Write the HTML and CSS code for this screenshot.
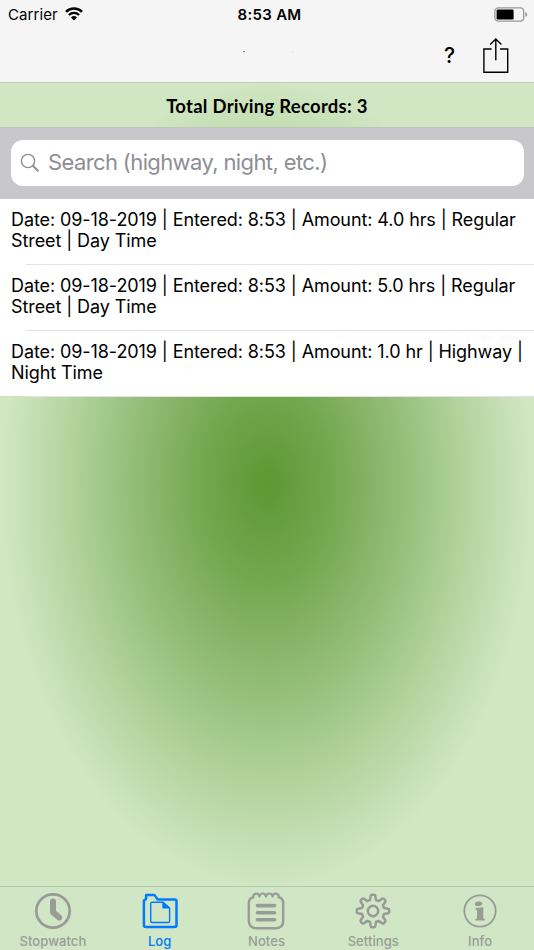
FILE: index.html
```html
<!DOCTYPE html>
<html lang="en">
<head>
  <meta charset="UTF-8" />
  <title>Driving Log</title>
  <link rel="stylesheet" href="styles.css">
</head>
<body>
  <div class="screen">
    <header class="top">
      <div class="status-bar">
        <div class="carrier">
          <span>Carrier</span>
          <svg class="wifi" width="18" height="14" viewBox="0 0 18 14">
            <path d="M1 4.8a11.5 11.5 0 0 1 16 0" fill="none" stroke="#000" stroke-width="2.5"/>
            <path d="M3.9 8a7.4 7.4 0 0 1 10.2 0" fill="none" stroke="#000" stroke-width="2.3"/>
            <path d="M6 10.4a4.3 4.3 0 0 1 6 0L9 13.6z"/>
          </svg>
        </div>
        <span class="time">8:53 AM</span>
        <svg class="battery" width="34" height="15" viewBox="0 0 34 15">
          <rect x=".9" y=".9" width="28.8" height="13.2" rx="3.4" fill="none" stroke="#999" stroke-width="1.3"/>
          <rect x="2.6" y="2.6" width="17" height="9.8" rx="1.2"/>
          <path d="M31.4 5c2.4.8 2.4 4.2 0 5z" fill="#999"/>
        </svg>
      </div>
      <nav class="nav-bar">
        <svg class="title-dots" width="60" height="10" viewBox="0 0 60 10">
          <rect x="5" y="3.2" width="2" height="1" fill="#777"/>
          <rect x="54" y="3.5" width="1" height="1" fill="#ccc"/>
        </svg>
        <span class="help">?</span>
        <svg class="share" width="28" height="37" viewBox="0 0 28 37" fill="none" stroke="#000" stroke-width="1.4">
          <path d="M9.6 12H1.9v23.3h23.8V12h-7.7"/>
          <path d="M13.8 23.2V2.2M8.2 7.6l5.6-5.7 5.6 5.7"/>
        </svg>
      </nav>
    </header>

    <h1 class="total">Total Driving Records: 3</h1>

    <div class="search">
      <div class="search-field">
        <svg width="20" height="20" viewBox="0 0 20 20" fill="none" stroke="#8e8e93">
          <circle cx="8" cy="8" r="6.6" stroke-width="1.4"/>
          <path d="M12.8 12.8l5.6 5.5" stroke-width="2"/>
        </svg>
        <span>Search (highway, night, etc.)</span>
      </div>
    </div>

    <ul class="records">
      <li>Date: 09-18-2019 | Entered: 8:53 | Amount: 4.0 hrs | Regular<br>Street | Day Time</li>
      <li>Date: 09-18-2019 | Entered: 8:53 | Amount: 5.0 hrs | Regular<br>Street | Day Time</li>
      <li>Date: 09-18-2019 | Entered: 8:53 | Amount: 1.0 hr | Highway |<br>Night Time</li>
    </ul>

    <footer class="tab-bar">
      <div class="tab">
        <svg width="40" height="40" viewBox="-20 -20 40 40" fill="none" stroke="#999b99">
          <circle r="16.7" stroke-width="2.7"/>
          <path d="M0-9.5V1.2L6.2 6.6" stroke-width="6" stroke-linecap="round" stroke-linejoin="round"/>
        </svg>
        <span>Stopwatch</span>
      </div>
      <div class="tab active">
        <svg width="40" height="40" viewBox="0 0 40 40" fill="none" stroke="#007aff" stroke-linejoin="round">
          <path d="M3.9 34V9.6L6.1 8V3.9h8.3l3.2 4.5h17.2q1.7 0 1.7 1.7V34q0 2-2 2H5.9q-2 0-2-2z" stroke-width="2.5"/>
          <path d="M12.2 11.2H23l6.6 6V30q0 1.5-1.5 1.5H12.2q-1.5 0-1.5-1.5V12.7q0-1.5 1.5-1.5z" stroke-width="1.4"/>
          <path d="M23 11.5v5.3h6.3z" fill="#007aff" stroke-width="1.4"/>
        </svg>
        <span>Log</span>
      </div>
      <div class="tab">
        <svg width="40" height="40" viewBox="0 0 40 40" fill="none" stroke="#999b99" stroke-linecap="round" stroke-linejoin="round">
          <path d="M7.2 6.2Q2.8 7.4 2.8 12.3v17.5q0 7.4 7.4 7.4h19.6q7.4 0 7.4-7.4V12.3q0-4.9-4.4-6.1" stroke-width="2.4"/>
          <path d="M7 6.6c.2-5.100 5.600-5.100 6.400-1.100c.6-4 5.900-4 6.600 0c.7-4 6-4 6.600 0c.8-4 6.200-4 6.400 1.100" stroke-width="2.2"/>
          <path d="M11.400 14.600h17.200M11.400 21.700h17.200M11.400 28.800h17.200" stroke-width="3.600"/>
        </svg>
        <span>Notes</span>
      </div>
      <div class="tab">
        <svg width="40" height="40" viewBox="-20 -20 40 40" fill="none" stroke="#999b99" stroke-width="2.5" stroke-linejoin="round">
          <path d="M-3-11L-2.300-15Q-2.100-16.200-1-16.200H1Q2.100-16.200 2.300-15L3-11L5.700-9.900L9-12.200Q10-12.900 10.800-12.100L12.100-10.800Q12.900-10 12.200-9L9.900-5.700L11-3L15-2.300Q16.200-2.100 16.200-1V1Q16.200 2.100 15 2.300L11 3L9.900 5.700L12.200 9Q12.900 10 12.100 10.800L10.800 12.100Q10 12.900 9 12.200L5.700 9.900L3 11L2.300 15Q2.100 16.200 1 16.200H-1Q-2.100 16.200-2.300 15L-3 11L-5.700 9.900L-9 12.200Q-10 12.900-10.800 12.100L-12.100 10.800Q-12.900 10-12.200 9L-9.900 5.700L-11 3L-15 2.300Q-16.200 2.100-16.200 1V-1Q-16.200-2.100-15-2.300L-11-3L-9.900-5.700L-12.200-9Q-12.900-10-12.100-10.800L-10.800-12.100Q-10-12.900-9-12.200L-5.700-9.900Z"/>
          <circle r="5.2"/>
        </svg>
        <span>Settings</span>
      </div>
      <div class="tab">
        <svg width="40" height="40" viewBox="-20 -20 40 40" fill="#999b99">
          <circle r="15.7" fill="none" stroke="#999b99" stroke-width="1.8"/>
          <ellipse cx="-.4" cy="-7.3" rx="3.8" ry="2.3" transform="rotate(-8)"/>
          <path d="M-4.500-2.900Q0-3 3.300-4V6.800Q3.400 7.900 4.900 8.200V9.600H-4.600V8.200Q-3 7.900-3 6.800V-.6Q-3-1.500-4.500-1.700z"/>
        </svg>
        <span>Info</span>
      </div>
    </footer>
  </div>
</body>
</html>
```
FILE: styles.css
```css
body {
  margin: 0;
  font-family: Inter, 'Liberation Sans', sans-serif;
  color: #000;
}

.screen {
  display: flex;
  flex-direction: column;
  height: 950px;
  background: radial-gradient(ellipse 265px 402px at 267px 484px, #5c9833 0%, #74a850 25%, #97c07d 54%, #b5d5a0 77%, #d1e6c3 100%);
}

/* status + navigation */
.top {
  box-sizing: border-box;
  height: 83px;
  background: #f5f5f5;
  border-bottom: 1px solid #c4c9c0;
}

.status-bar {
  display: grid;
  grid-template-columns: 1fr auto 1fr;
  align-items: center;
  height: 28px;
  padding: 0 6px 0 8px;
  font-size: 15px;
}

.carrier {
  display: flex;
  align-items: center;
  gap: 7px;
  letter-spacing: 0.1px;
}

.time {
  padding-left: 3px;
  font-weight: 600;
  letter-spacing: 0.3px;
}

.battery {
  justify-self: end;
}

.nav-bar {
  display: flex;
  align-items: center;
  justify-content: flex-end;
  height: 54px;
  padding-right: 24px;
}

.title-dots {
  margin-right: 146px;
  margin-bottom: 5px;
}

.help {
  font-size: 21px;
  font-weight: 500;
  margin-right: 27px;
}

.total {
  box-sizing: border-box;
  height: 44px;
  margin: 0;
  font-family: Lato, sans-serif;
  font-size: 18.5px;
  font-weight: 700;
  letter-spacing: 0.27px;
  line-height: 46px;
  text-align: center;
}

.search {
  box-sizing: border-box;
  height: 72px;
  padding: 12px 10.5px 13px;
  background: #c7c7cc;
  border-top: 1px solid #bfc4bf;
}

.search-field {
  display: flex;
  align-items: center;
  gap: 8px;
  height: 46px;
  padding-left: 9.5px;
  border-radius: 12px;
  background: #fff;
  color: #8e8e93;
  font-size: 22px;
  letter-spacing: -0.62px;
}

.search-field span {
  padding-bottom: 2px;
}

.records {
  margin: 0;
  padding: 0;
  height: 197px;
  list-style: none;
  background: #fff;
}

.records li {
  box-sizing: border-box;
  height: 66px;
  padding: 9.5px 0 0 11px;
  font-size: 18px;
  letter-spacing: -0.09px;
  line-height: 21.5px;
  white-space: nowrap;
  background: linear-gradient(#e2e2e4, #e2e2e4) 26px 100% / 100% 1px no-repeat;
}

.tab-bar {
  box-sizing: border-box;
  display: grid;
  grid-template-columns: repeat(5, 1fr);
  height: 64px;
  margin-top: auto;
  border-top: 1px solid #b5c9aa;
  background: #d1e6c5;
}

.tab {
  display: flex;
  flex-direction: column;
  align-items: center;
  padding: 4px 1px 0 0;
  color: #999b99;
  font-size: 13px;
  font-weight: 500;
  letter-spacing: 0.08px;
  line-height: 20px;
}

.tab.active {
  color: #007aff;
}
```
